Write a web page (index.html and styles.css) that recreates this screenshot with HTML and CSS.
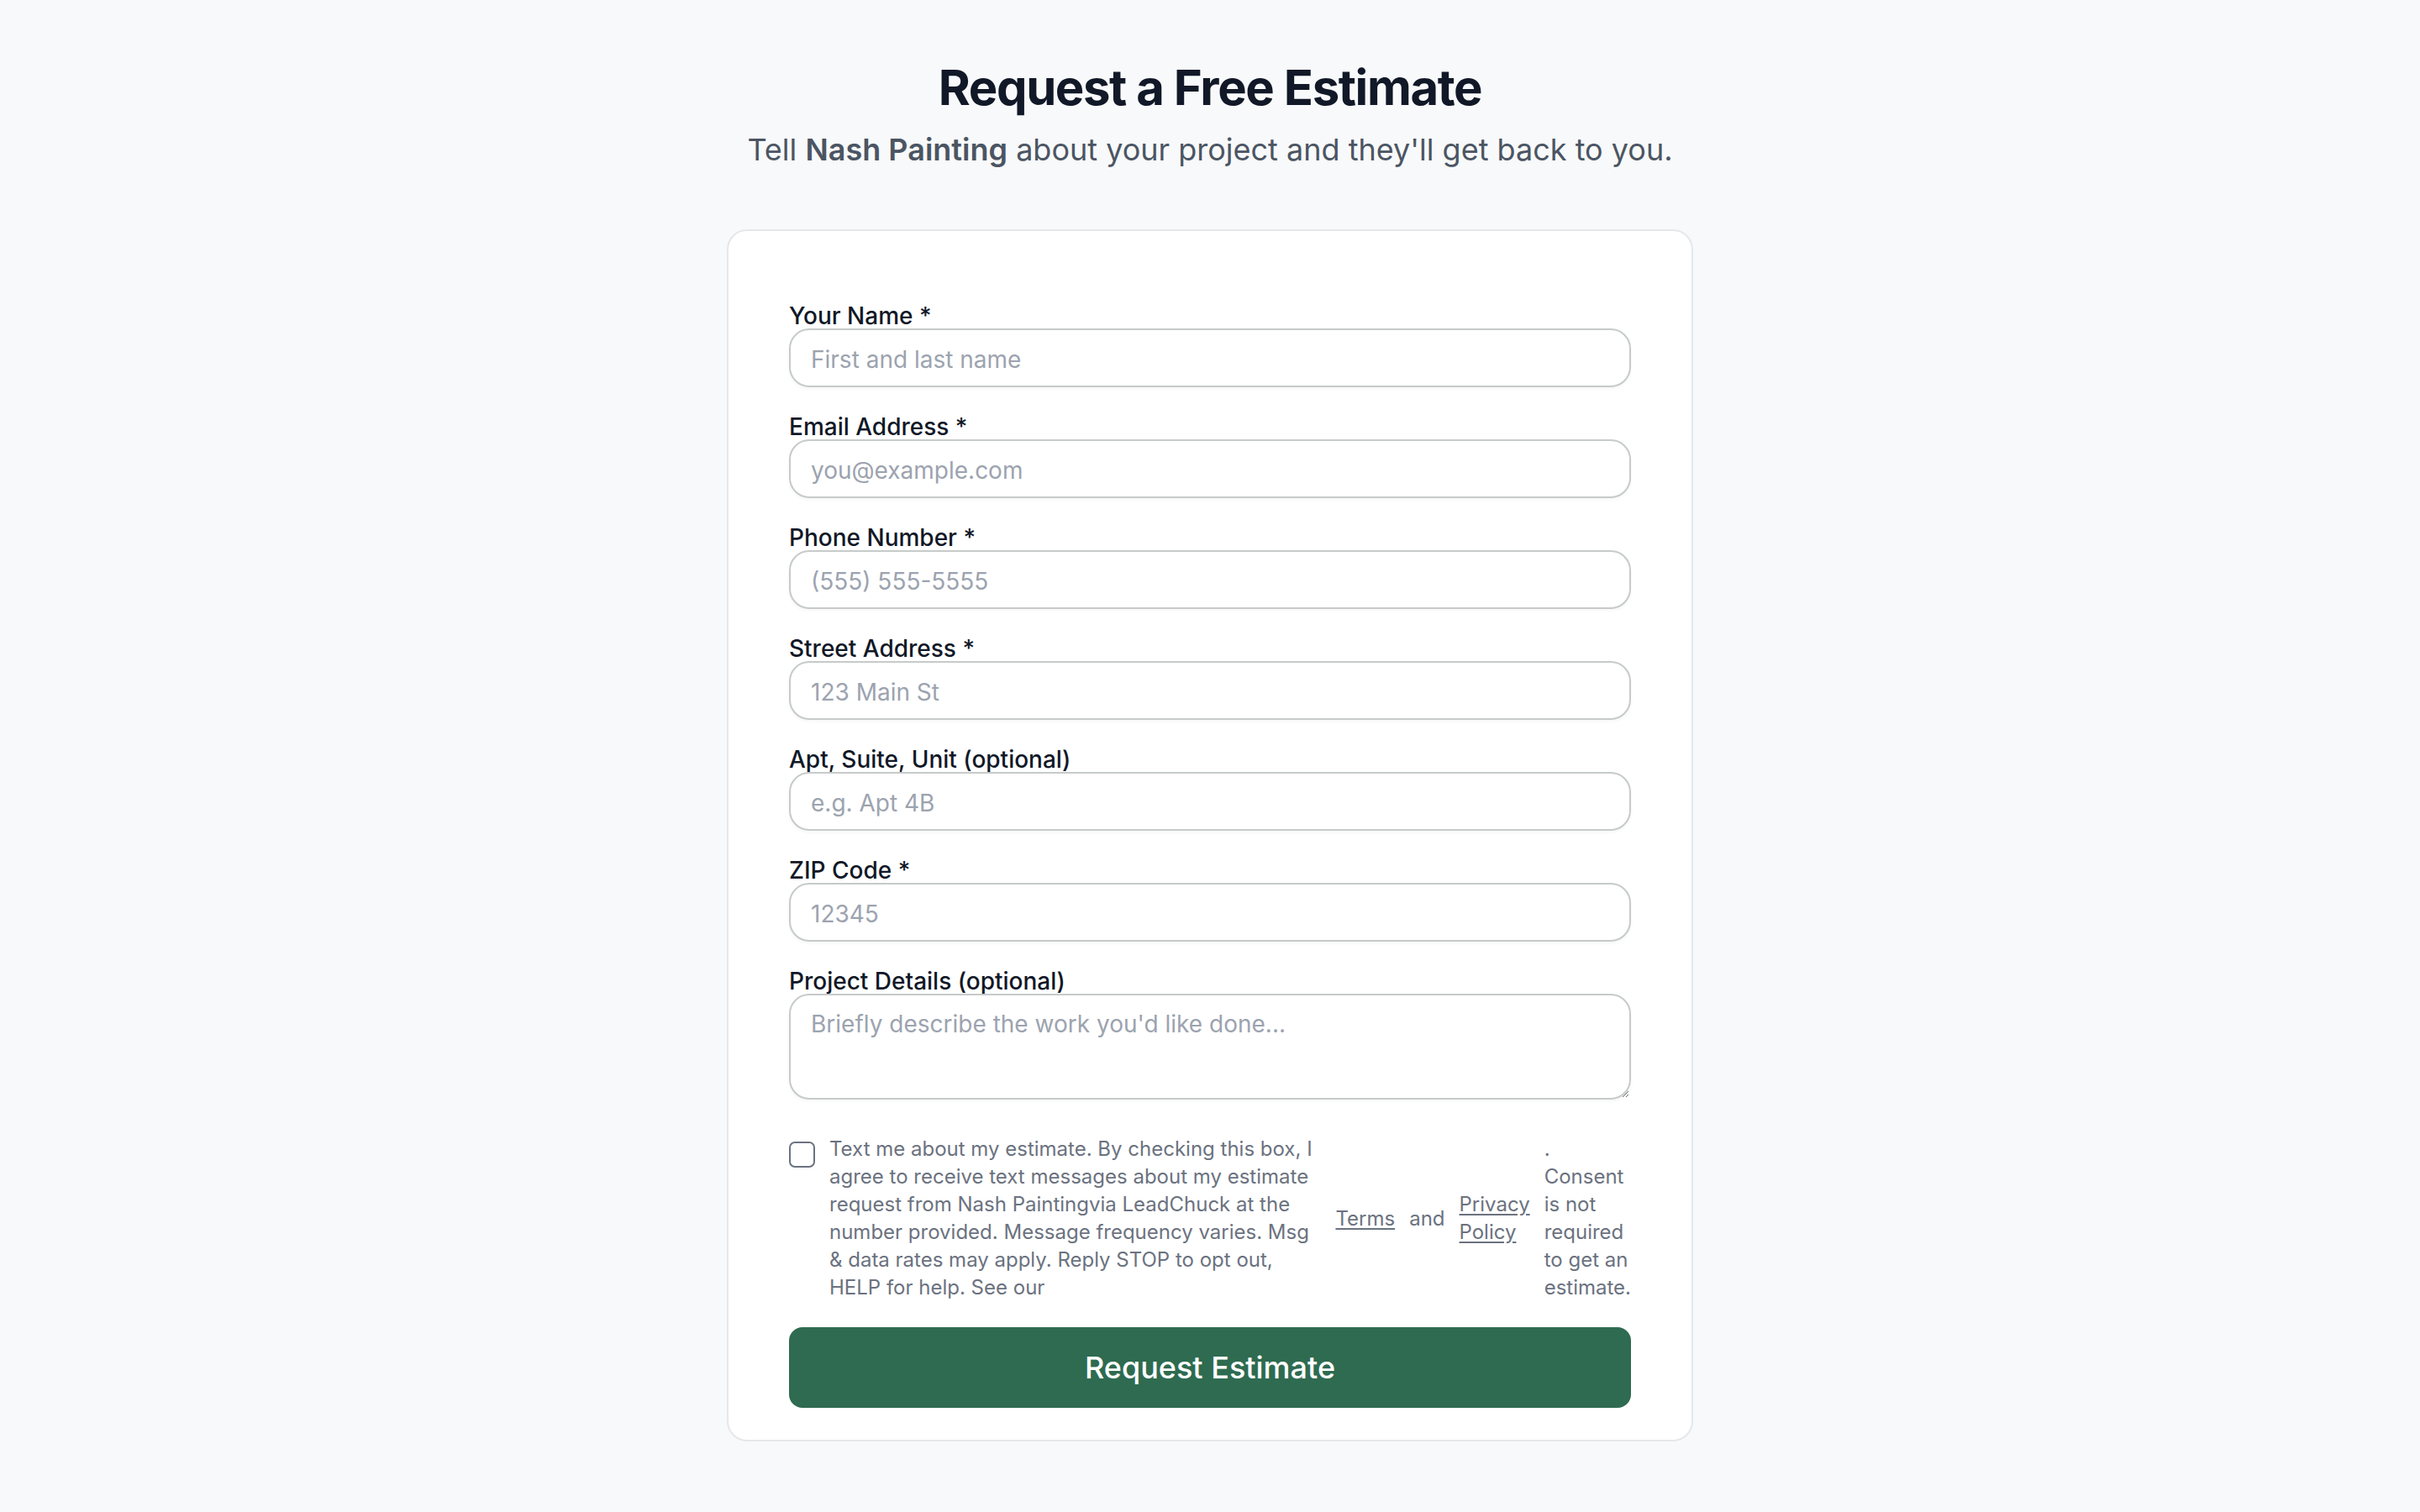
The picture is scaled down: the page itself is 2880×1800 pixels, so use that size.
FILE: index.html
```html
<!DOCTYPE html>
<html lang="en">
<head>
<meta charset="utf-8">
<title>Request a Free Estimate – Nash Painting</title>
<link rel="stylesheet" href="styles.css">
</head>
<body>
<main class="page">
  <header class="intro">
    <h1 class="intro-title">Request a Free Estimate</h1>
    <p class="intro-sub">Tell <strong>Nash Painting</strong> about your project and they'll get back to you.</p>
  </header>

  <form class="card" onsubmit="return false;">
    <div class="fields">
      <div class="field">
        <label class="field-label" for="name">Your Name *</label>
        <input class="field-input" id="name" type="text" placeholder="First and last name">
      </div>
      <div class="field">
        <label class="field-label" for="email">Email Address *</label>
        <input class="field-input" id="email" type="email" placeholder="you@example.com">
      </div>
      <div class="field">
        <label class="field-label" for="phone">Phone Number *</label>
        <input class="field-input" id="phone" type="tel" placeholder="(555) 555-5555">
      </div>
      <div class="field">
        <label class="field-label" for="street">Street Address *</label>
        <input class="field-input" id="street" type="text" placeholder="123 Main St">
      </div>
      <div class="field">
        <label class="field-label" for="unit">Apt, Suite, Unit (optional)</label>
        <input class="field-input" id="unit" type="text" placeholder="e.g. Apt 4B">
      </div>
      <div class="field">
        <label class="field-label" for="zip">ZIP Code *</label>
        <input class="field-input" id="zip" type="text" placeholder="12345">
      </div>
      <div class="field">
        <label class="field-label" for="details">Project Details (optional)</label>
        <textarea class="field-input field-area" id="details" placeholder="Briefly describe the work you'd like done..."></textarea>
      </div>
    </div>

    <label class="consent">
      <input class="consent-box" type="checkbox">
      <span class="consent-text">Text me about my estimate. By checking this box, I agree to receive text messages about my estimate request from Nash Paintingvia LeadChuck at the number provided. Message frequency varies. Msg &amp; data rates may apply. Reply STOP to opt out, HELP for help. See our</span>
      <a class="consent-link" href="#">Terms</a>
      <span class="consent-text">and</span>
      <a class="consent-link" href="#">Privacy Policy</a>
      <span class="consent-text">. Consent is not required to get an estimate.</span>
    </label>

    <button class="submit" type="submit">Request Estimate</button>
  </form>
</main>
</body>
</html>
```

FILE: styles.css
```css
* {
  box-sizing: border-box;
}

html, body {
  margin: 0;
  padding: 0;
}

body {
  background: #f8f9fa;
  font-family: Inter, "Noto Sans", "Liberation Sans", sans-serif;
  color: #111827;
  min-height: 1800px;
}

.page {
  display: flex;
  flex-direction: column;
  align-items: center;
  padding-top: 68px;
}

/* heading block */
.intro {
  text-align: center;
}

.intro-title {
  margin: 0;
  font-size: 58px;
  line-height: 72px;
  font-weight: 700;
  letter-spacing: -1.4px;
  color: #111827;
}

.intro-sub {
  margin: 12px 0 0;
  font-size: 36px;
  line-height: 52px;
  color: #4b5563;
}

.intro-sub strong {
  font-weight: 600;
  color: #4b5563;
}

/* form card */
.card {
  width: 1150px;
  margin-top: 69px;
  background: #ffffff;
  border: 2px solid #e5e7eb;
  border-radius: 24px;
  padding: 86px 72px 38px;
}

.fields {
  display: flex;
  flex-direction: column;
  gap: 32px;
}

.field {
  display: flex;
  flex-direction: column;
}

.field-label {
  font-size: 28px;
  line-height: 30px;
  font-weight: 500;
  color: #111827;
}

.field-input {
  display: block;
  width: 100%;
  height: 70px;
  margin: 0;
  padding: 15px 24px 11px;
  font-family: inherit;
  font-size: 28px;
  line-height: 40px;
  color: #111827;
  background: #ffffff;
  border: 2px solid #c6cbca;
  border-radius: 24px;
  box-shadow: 0 2px 4px rgba(0, 0, 0, 0.04);
  outline: none;
}

.field-input::placeholder {
  color: #9ca3af;
}

.field-area {
  height: 126px;
  padding-top: 14px;
  resize: vertical;
}

/* SMS consent row */
.consent {
  display: flex;
  align-items: center;
  gap: 17px;
  margin-top: 42px;
  font-size: 24px;
  line-height: 33px;
  color: #6b7280;
}

.consent-box {
  appearance: none;
  -webkit-appearance: none;
  flex-shrink: 0;
  align-self: flex-start;
  width: 31px;
  height: 31px;
  margin: 8px 0 0;
  background: #ffffff;
  border: 2px solid #6b7280;
  border-radius: 7px;
}

.consent-link {
  color: #6b7280;
  text-decoration: underline;
  text-underline-offset: 3px;
}

/* submit */
.submit {
  display: block;
  width: 100%;
  height: 96px;
  margin-top: 31px;
  background: #2e6b50;
  color: #ffffff;
  border: none;
  border-radius: 16px;
  font-family: inherit;
  font-size: 36px;
  font-weight: 500;
  cursor: pointer;
}
```
